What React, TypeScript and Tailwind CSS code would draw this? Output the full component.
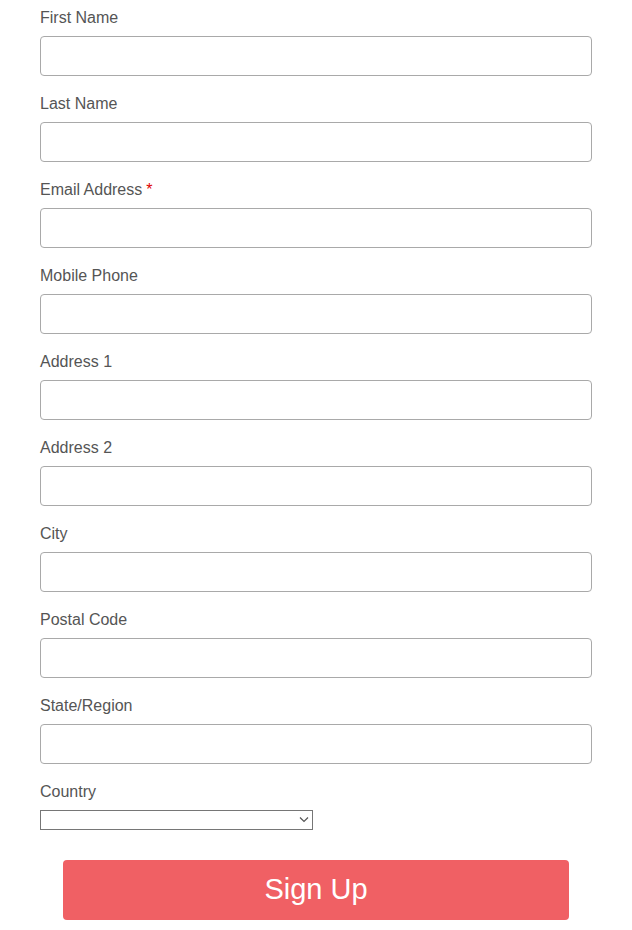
const fields = [
  { label: "First Name" },
  { label: "Last Name" },
  { label: "Email Address", required: true },
  { label: "Mobile Phone" },
  { label: "Address 1" },
  { label: "Address 2" },
  { label: "City" },
  { label: "Postal Code" },
  { label: "State/Region" },
];

export default function App() {
  return (
    <div
      className="min-h-screen bg-white px-[40px] pt-[8px]"
      style={{ fontFamily: '"Liberation Sans", Arial, sans-serif' }}
    >
      <form className="flex w-[552px] flex-col" onSubmit={(e) => e.preventDefault()}>
        {fields.map((f) => (
          <div key={f.label} className="mb-[18px] flex flex-col">
            <label className="mb-[8px] h-[20px] text-[16px] leading-[20px] text-[#555555]">
              {f.label}
              {f.required && <span className="ml-[4px] text-[#e00000]">*</span>}
            </label>
            <input
              type="text"
              className="h-[40px] w-full rounded-[4px] border border-[#a9a9a9] bg-white px-2 text-[16px] outline-none"
            />
          </div>
        ))}
        <div className="flex flex-col">
          <label className="mb-[8px] h-[20px] text-[16px] leading-[20px] text-[#555555]">Country</label>
          <div className="relative h-[20px] w-[273px]">
            <select className="block h-[20px] w-full appearance-none border border-[#767676] bg-white text-[13px]">
              <option value=""></option>
            </select>
            <svg
              className="pointer-events-none absolute right-[4px] top-[6px]"
              width="10"
              height="7"
              viewBox="0 0 10 7"
              fill="none"
              stroke="#555"
              strokeWidth="1.2"
            >
              <path d="M1 1.5 L5 5.5 L9 1.5" />
            </svg>
          </div>
        </div>
        <div className="mt-[30px] flex justify-center">
          <button
            type="submit"
            className="h-[60px] w-[506px] rounded-[4px] bg-[#f06064] text-[29px] text-white"
          >
            Sign Up
          </button>
        </div>
      </form>
    </div>
  );
}
